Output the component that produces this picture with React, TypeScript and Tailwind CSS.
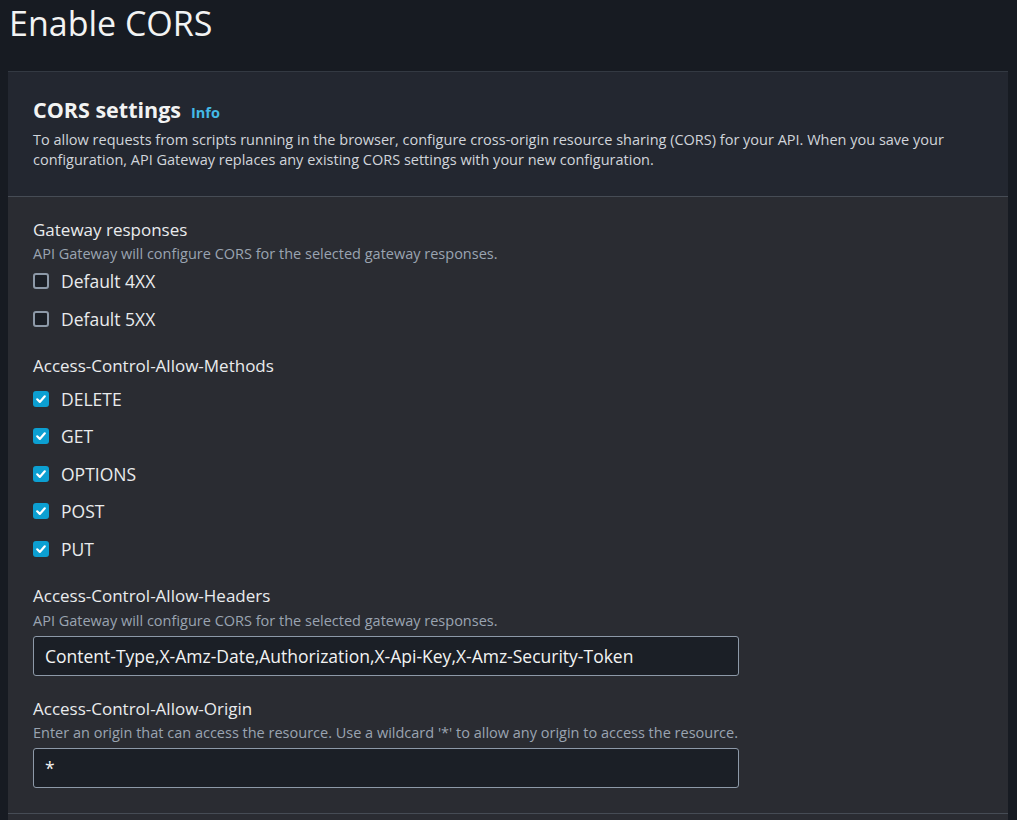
import React from 'react';

const methods = ['DELETE', 'GET', 'OPTIONS', 'POST', 'PUT'];

const Checkbox: React.FC<{ checked?: boolean; label: string }> = ({ checked, label }) => (
  <div className="flex items-center gap-3 h-[22px]">
    {checked ? (
      <div className="w-4 h-4 rounded-[3px] bg-[#0c9fd1] flex items-center justify-center">
        <svg width="12" height="12" viewBox="0 0 12 12" fill="none">
          <path d="M2.2 6.3l2.6 2.6 5-5.6" stroke="#fff" strokeWidth="2.2" strokeLinecap="round" strokeLinejoin="round" />
        </svg>
      </div>
    ) : (
      <div className="w-4 h-4 rounded-[3px] border-2 border-[#8d99a8] bg-[#1b1f26]" />
    )}
    <span className="text-[17.5px] text-[#e9ebed]">{label}</span>
  </div>
);

export default function App() {
  return (
    <div className="min-h-[820px] bg-[#171b22] pl-2 pr-[9px] font-['Open_Sans',sans-serif] text-[#e9ebed]">
      <h1 className="pl-px pt-[1px] text-[34px] leading-[44px] font-normal text-[#f2f3f3]">Enable CORS</h1>

      {/* CORS settings card */}
      <div className="mt-[26px] border-t border-[#333942]">
        <div className="bg-[#232730] px-[25px] pt-[25px] pb-[26px] border-b border-[#464c55]">
          <div className="flex items-baseline gap-[10px]">
            <h2 className="text-[21.5px] leading-[26px] font-bold text-[#f2f3f3]">CORS settings</h2>
            <span className="text-[14.5px] font-bold text-[#44b9e6]">Info</span>
          </div>
          <p className="mt-[6px] text-[14.5px] leading-[20px] text-[#d1d5db] max-w-[960px]">
            To allow requests from scripts running in the browser, configure cross-origin resource sharing (CORS) for your API. When you save your configuration, API Gateway replaces any existing CORS settings with your new configuration.
          </p>
        </div>

        <div className="bg-[#2a2c32] px-[25px] pt-[21px] pb-[25px] border-b border-[#464c55]">
          {/* Gateway responses */}
          <div>
            <div className="text-[17px] leading-[24px]">Gateway responses</div>
            <div className="text-[14.5px] leading-[20px] text-[#9aa4b1] mt-[2px]">API Gateway will configure CORS for the selected gateway responses.</div>
            <div className="mt-[6px] flex flex-col gap-4">
              <Checkbox label="Default 4XX" />
              <Checkbox label="Default 5XX" />
            </div>
          </div>

          {/* Methods */}
          <div className="mt-[24px]">
            <div className="text-[17px] leading-[24px]">Access-Control-Allow-Methods</div>
            <div className="mt-[10px] flex flex-col gap-[15.5px]">
              {methods.map((m) => (
                <Checkbox key={m} checked label={m} />
              ))}
            </div>
          </div>

          {/* Headers */}
          <div className="mt-[24px]">
            <div className="text-[17px] leading-[24px]">Access-Control-Allow-Headers</div>
            <div className="text-[14.5px] leading-[20px] text-[#9aa4b1] mt-[3px]">API Gateway will configure CORS for the selected gateway responses.</div>
            <div className="mt-[5px] w-[706px] h-[40px] rounded-[3px] border border-[#8d99a8] bg-[#1b1f26] px-[11px] flex items-center text-[17.5px] text-[#f2f3f3]">
              Content-Type,X-Amz-Date,Authorization,X-Api-Key,X-Amz-Security-Token
            </div>
          </div>

          {/* Origin */}
          <div className="mt-[21px]">
            <div className="text-[17px] leading-[24px]">Access-Control-Allow-Origin</div>
            <div className="text-[14.5px] leading-[20px] text-[#9aa4b1] mt-[2px]">Enter an origin that can access the resource. Use a wildcard '*' to allow any origin to access the resource.</div>
            <div className="mt-[5px] w-[706px] h-[40px] rounded-[3px] border border-[#8d99a8] bg-[#1b1f26] px-[11px] flex items-center text-[17.5px] text-[#f2f3f3]">
              *
            </div>
          </div>
        </div>
        <div className="bg-[#2a2c32] h-[40px]" />
      </div>
    </div>
  );
}
